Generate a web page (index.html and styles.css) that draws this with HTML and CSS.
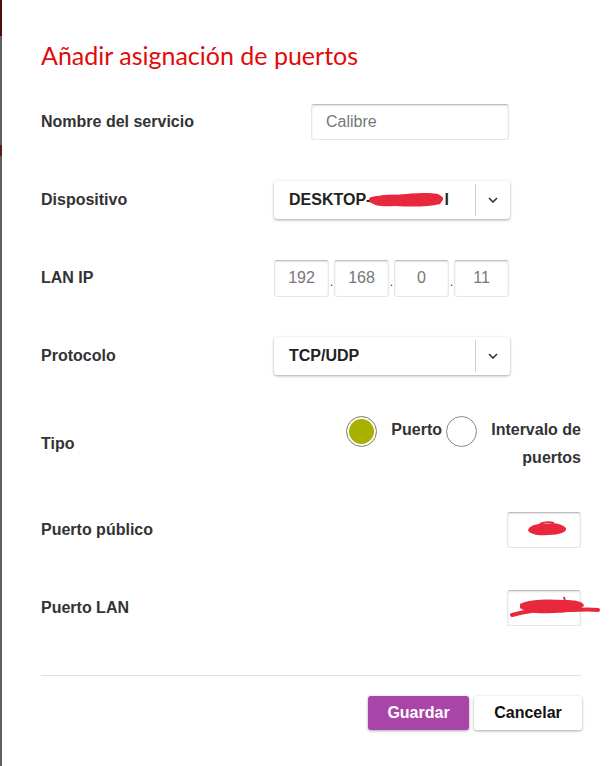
FILE: index.html
```html
<!DOCTYPE html>
<html lang="es">
<head>
<meta charset="utf-8">
<title>Añadir asignación de puertos</title>
<link rel="stylesheet" href="styles.css">
</head>
<body>
<div class="edge"></div>
<main class="dialog">
  <h1 class="title">Añadir asignación de puertos</h1>

  <div class="row">
    <span class="label">Nombre del servicio</span>
    <div class="input name-input">Calibre</div>
  </div>

  <div class="row">
    <span class="label">Dispositivo</span>
    <div class="select">
      <span class="select-value">DESKTOP-<svg class="scribble-host" width="76" height="18" viewBox="0 0 76 18"><path d="M2 10 C6 5 16 3 30 4 C44 2 58 1 70 3 C75 5 75 10 72 13 C60 16 44 16 27 15 C15 16 5 15 2 10 Z" fill="#e8283c"/><path d="M4 9 C16 6 36 7 52 6 C61 5 68 6 72 8" stroke="#e8283c" stroke-width="6" fill="none" stroke-linecap="round"/></svg>l</span>
      <span class="select-sep"></span>
      <svg class="chevron" width="10" height="6" viewBox="0 0 10 6"><path d="M1 1 L5 5 L9 1" stroke="#333" stroke-width="1.6" fill="none"/></svg>
    </div>
  </div>

  <div class="row">
    <span class="label">LAN IP</span>
    <div class="ip">
      <div class="input ip-part">192</div><span class="dot">.</span>
      <div class="input ip-part">168</div><span class="dot">.</span>
      <div class="input ip-part">0</div><span class="dot">.</span>
      <div class="input ip-part">11</div>
    </div>
  </div>

  <div class="row">
    <span class="label">Protocolo</span>
    <div class="select">
      <span class="select-value">TCP/UDP</span>
      <span class="select-sep"></span>
      <svg class="chevron" width="10" height="6" viewBox="0 0 10 6"><path d="M1 1 L5 5 L9 1" stroke="#333" stroke-width="1.6" fill="none"/></svg>
    </div>
  </div>

  <div class="row row-tipo">
    <span class="label label-tipo">Tipo</span>
    <div class="radios">
      <div class="radio-item">
        <span class="radio radio-on"></span>
        <span class="radio-text">Puerto</span>
      </div>
      <div class="radio-item">
        <span class="radio"></span>
        <span class="radio-text radio-text-wide">Intervalo de puertos</span>
      </div>
    </div>
  </div>

  <div class="row row-port">
    <span class="label">Puerto público</span>
    <div class="input port">
      <svg class="scribble" width="42" height="18" viewBox="0 0 42 18"><path d="M2 10 C4 5 12 3 20 4 C28 2 36 4 40 8 C41 12 34 15 22 15 C12 16 3 14 2 10 Z" fill="#e8283c"/><path d="M14 4 C18 2 24 2 28 3" stroke="#e8283c" stroke-width="2" fill="none"/></svg>
    </div>
  </div>

  <div class="row row-port">
    <span class="label">Puerto LAN</span>
    <div class="input port">
      <svg class="scribble scribble-lan" width="92" height="24" viewBox="0 0 92 24"><path d="M12 8 C22 3 40 3 56 4 C66 4 74 5 76 9 C75 14 60 17 44 17 C30 18 18 16 12 12 Z" fill="#e8283c"/><path d="M4 19 C20 14 40 13 60 14 C70 14 80 13 90 14" stroke="#e8283c" stroke-width="4" fill="none" stroke-linecap="round"/><path d="M56 1 L58 10" stroke="#e8283c" stroke-width="2"/></svg>
    </div>
  </div>

  <hr class="divider">

  <div class="actions">
    <button class="btn btn-primary">Guardar</button>
    <button class="btn btn-secondary">Cancelar</button>
  </div>
</main>
</body>
</html>
```

FILE: styles.css
```css
* { box-sizing: border-box; }

html, body {
  margin: 0;
  padding: 0;
  background: #fff;
}

body {
  display: flex;
  min-height: 766px;
  font-family: "Liberation Sans", Arial, sans-serif;
  color: #333;
}

.edge {
  width: 2px;
  flex: 0 0 2px;
  background: linear-gradient(#4b0e0e 0 36px, #606060 36px 145px, #5a1a1a 145px 156px, #606060 156px);
}

.dialog {
  width: 540px;
  margin-left: 39px;
  padding-top: 40px;
  display: flex;
  flex-direction: column;
}

.title {
  margin: 0 0 13px;
  font-family: Lato, "Open Sans", sans-serif;
  font-weight: 400;
  font-size: 25px;
  line-height: 30px;
  color: #e20a0a;
}

.row {
  height: 78px;
  display: flex;
  align-items: center;
  justify-content: space-between;
}

.label {
  font-weight: 700;
  font-size: 16px;
  color: #333;
}

.input {
  background: #fff;
  border: 1px solid #e6e6e6;
  border-top-color: #bdbdbd;
  border-radius: 3px;
  box-shadow: inset 0 1px 2px rgba(0, 0, 0, 0.12);
  font-size: 16px;
  color: #777;
}

.name-input {
  width: 198px;
  height: 36px;
  margin-right: 72px;
  padding-left: 14px;
  display: flex;
  align-items: center;
}

.select {
  width: 236px;
  height: 38px;
  margin-right: 71px;
  background: #fff;
  border-radius: 3px;
  box-shadow: 0 1px 3px rgba(0, 0, 0, 0.35);
  display: flex;
  align-items: center;
  padding-left: 15px;
}

.select-value {
  flex: 1;
  font-weight: 700;
  font-size: 16px;
  color: #222;
  display: flex;
  align-items: center;
}

.scribble-host {
  display: block;
  margin-left: -3px;
  margin-right: 0;
}

.select-sep {
  width: 1px;
  height: 32px;
  background: #d0d0d0;
}

.chevron {
  margin: 0 12px 0 12px;
}

.ip {
  margin-right: 72px;
  display: flex;
  align-items: center;
}

.ip-part {
  width: 55px;
  height: 37px;
  display: flex;
  align-items: center;
  justify-content: center;
}

.dot {
  width: 5px;
  text-align: center;
  font-size: 12px;
  color: #333;
  padding-top: 8px;
}

.row-tipo {
  height: 96px;
  align-items: flex-start;
}

.label-tipo {
  margin-top: 40px;
}

.radios {
  display: flex;
  align-items: flex-start;
  margin-top: 21px;
}

.radio-item {
  display: flex;
  align-items: flex-start;
}

.radio {
  width: 31px;
  height: 31px;
  border-radius: 50%;
  border: 1px solid #8a8a8a;
  background: #fff;
  flex: 0 0 31px;
}

.radio-on {
  background: #a8b000;
  box-shadow: inset 0 0 0 2px #fff;
}

.radio-text {
  font-weight: 700;
  font-size: 16px;
  line-height: 28px;
  margin-left: 14px;
  margin-right: 4px;
  color: #333;
}

.radio-text-wide {
  width: 90px;
  text-align: right;
  margin-right: 0;
}

.port {
  width: 74px;
  height: 36px;
  position: relative;
}

.scribble {
  position: absolute;
  left: 18px;
  top: 7px;
}

.scribble-lan {
  left: 0;
  top: 5px;
}

.divider {
  margin: 28px 0 0;
  border: 0;
  border-top: 1px solid #e2e2e2;
  height: 0;
}

.actions {
  display: flex;
  justify-content: flex-end;
  gap: 5px;
  margin-top: 20px;
  margin-right: -1px;
}

.btn {
  height: 34px;
  border: 0;
  border-radius: 3px;
  font-family: "Liberation Sans", Arial, sans-serif;
  font-weight: 700;
  font-size: 16px;
  cursor: pointer;
  box-shadow: 0 1px 3px rgba(0, 0, 0, 0.35);
}

.btn-primary {
  width: 101px;
  background: #a945a9;
  color: #fff;
}

.btn-secondary {
  width: 108px;
  background: #fff;
  color: #111;
}
```
